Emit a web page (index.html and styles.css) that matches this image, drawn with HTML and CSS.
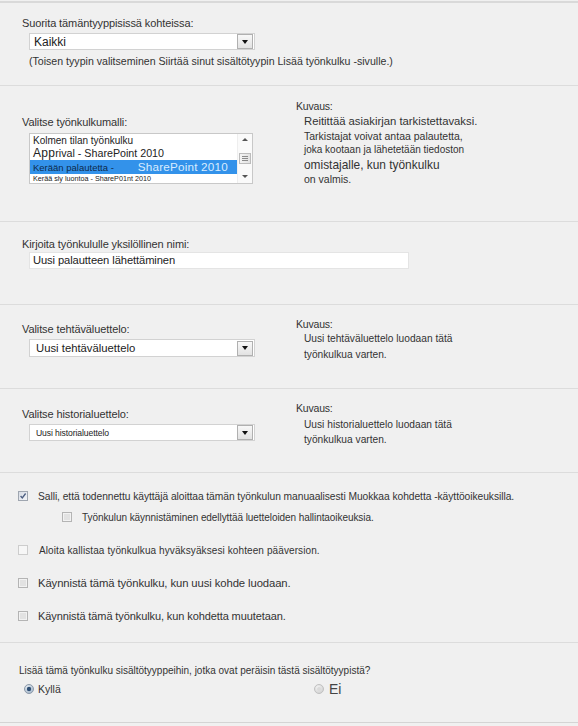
FILE: index.html
```html
<!DOCTYPE html>
<html lang="fi">
<head>
<meta charset="utf-8">
<title>Lisää työnkulku</title>
<link rel="stylesheet" href="styles.css">
</head>
<body>
<div class="page">
  <section class="sec s1">
    <div class="label">Suorita tämäntyyppisissä kohteissa:</div>
    <div class="select sel-kaikki">
      <span class="sel-text">Kaikki</span>
      <span class="sel-btn"><span class="tri"></span></span>
    </div>
    <div class="note">(Toisen tyypin valitseminen Siirtää sinut sisältötyypin Lisää työnkulku -sivulle.)</div>
  </section>

  <section class="sec s2 cols">
    <div class="left">
      <div class="label">Valitse työnkulkumalli:</div>
      <div class="listbox">
        <div class="items">
          <div class="item i1">Kolmen tilan työnkulku</div>
          <div class="item i2"><span class="big">App</span>rival - SharePoint 2010</div>
          <div class="item i3 selected">Kerään palautetta -<span class="sp">SharePoint 2010</span></div>
          <div class="item i4">Kerää sly luontoa - ShareP01nt 2010</div>
        </div>
        <div class="scroll">
          <span class="arr up"></span>
          <span class="thumb"><i></i><i></i><i></i></span>
          <span class="arr down"></span>
        </div>
      </div>
    </div>
    <div class="right">
      <div class="kuvaus">Kuvaus:</div>
      <div class="desc d1">Reitittää asiakirjan tarkistettavaksi.</div>
      <div class="desc d2">Tarkistajat voivat antaa palautetta,</div>
      <div class="desc d3">joka kootaan ja lähetetään tiedoston</div>
      <div class="desc d4">omistajalle, kun työnkulku</div>
      <div class="desc d5">on valmis.</div>
    </div>
  </section>

  <section class="sec s3">
    <div class="label">Kirjoita työnkululle yksilöllinen nimi:</div>
    <div class="input">Uusi palautteen lähettäminen</div>
  </section>

  <section class="sec s4 cols">
    <div class="left">
      <div class="label">Valitse tehtäväluettelo:</div>
      <div class="select sel-task">
        <span class="sel-text">Uusi tehtäväluettelo</span>
        <span class="sel-btn"><span class="tri"></span></span>
      </div>
    </div>
    <div class="right">
      <div class="kuvaus">Kuvaus:</div>
      <div class="desc dl first">Uusi tehtäväluettelo luodaan tätä</div>
      <div class="desc dl">työnkulkua varten.</div>
    </div>
  </section>

  <section class="sec s5 cols">
    <div class="left">
      <div class="label">Valitse historialuettelo:</div>
      <div class="select sel-hist">
        <span class="sel-text">Uusi historialuettelo</span>
        <span class="sel-btn"><span class="tri"></span></span>
      </div>
    </div>
    <div class="right">
      <div class="kuvaus">Kuvaus:</div>
      <div class="desc dh first">Uusi historialuettelo luodaan tätä</div>
      <div class="desc dh">työnkulkua varten.</div>
    </div>
  </section>

  <section class="sec s6">
    <div class="check r1">
      <svg class="cb" width="10" height="10" viewBox="0 0 10 10"><defs><linearGradient id="g1" x1="0" y1="0" x2="1" y2="1"><stop offset="0" stop-color="#d6dbe4"/><stop offset="1" stop-color="#f4f6f9"/></linearGradient></defs><rect x="0.5" y="0.5" width="9" height="9" fill="url(#g1)" stroke="#9fa6b0"/><path d="M2.6 5 L4.3 7 L7.6 2.5" fill="none" stroke="#4d5f82" stroke-width="1.3"/></svg>
      <span class="ct t1">Salli, että todennettu käyttäjä aloittaa tämän työnkulun manuaalisesti Muokkaa kohdetta -käyttöoikeuksilla.</span>
    </div>
    <div class="check r2">
      <svg class="cb" width="10" height="10" viewBox="0 0 10 10"><rect x="0.5" y="0.5" width="9" height="9" fill="#f2f2f2" stroke="#b4b4b4"/><rect x="2" y="2" width="6" height="6" fill="#e2e2e2"/></svg>
      <span class="ct t2">Työnkulun käynnistäminen edellyttää luetteloiden hallintaoikeuksia.</span>
    </div>
    <div class="check r3">
      <svg class="cb" width="10" height="10" viewBox="0 0 10 10"><rect x="0.5" y="0.5" width="9" height="9" fill="#f7f7f7" stroke="#cdcdcd"/></svg>
      <span class="ct t3">Aloita kallistaa työnkulkua hyväksyäksesi kohteen pääversion.</span>
    </div>
    <div class="check r4">
      <svg class="cb" width="10" height="10" viewBox="0 0 10 10"><rect x="0.5" y="0.5" width="9" height="9" fill="#f2f2f2" stroke="#b4b4b4"/><rect x="2" y="2" width="6" height="6" fill="#e2e2e2"/></svg>
      <span class="ct t4">Käynnistä tämä työnkulku, kun uusi kohde luodaan.</span>
    </div>
    <div class="check r5">
      <svg class="cb" width="10" height="10" viewBox="0 0 10 10"><rect x="0.5" y="0.5" width="9" height="9" fill="#f2f2f2" stroke="#b4b4b4"/><rect x="2" y="2" width="6" height="6" fill="#e2e2e2"/></svg>
      <span class="ct t5">Käynnistä tämä työnkulku, kun kohdetta muutetaan.</span>
    </div>
  </section>

  <section class="sec s7">
    <div class="question">Lisää tämä työnkulku sisältötyyppeihin, jotka ovat peräisin tästä sisältötyypistä?</div>
    <div class="radios">
      <label class="radio yes">
        <svg width="10" height="10" viewBox="0 0 10 10"><defs><radialGradient id="rg1" cx="0.4" cy="0.35" r="0.7"><stop offset="0" stop-color="#eef3f8"/><stop offset="1" stop-color="#9fb3c8"/></radialGradient></defs><circle cx="5" cy="5" r="4.5" fill="url(#rg1)" stroke="#8e9aa8"/><circle cx="5" cy="5" r="2.2" fill="#2f4f74"/></svg>
        <span class="rt">Kyllä</span>
      </label>
      <label class="radio no">
        <svg width="10" height="10" viewBox="0 0 10 10"><defs><radialGradient id="rg2" cx="0.4" cy="0.35" r="0.7"><stop offset="0" stop-color="#f4f4f4"/><stop offset="1" stop-color="#cfcfcf"/></radialGradient></defs><circle cx="5" cy="5" r="4.5" fill="url(#rg2)" stroke="#c0c0c0"/><circle cx="5" cy="5" r="2" fill="#dadada"/></svg>
        <span class="rt ei">Ei</span>
      </label>
    </div>
  </section>
</div>
</body>
</html>
```

FILE: styles.css
```css
html, body {
  margin: 0;
  padding: 0;
  background: #f0f0f0;
}
body {
  font-family: "Liberation Sans", Arial, sans-serif;
  color: #333;
  font-size: 11px;
}
.page {
  border-top: 2px solid #d9d9d9;
  margin-top: 1px;
  border-bottom: 1px solid #d4d4d4;
}
.sec {
  box-sizing: border-box;
  border-bottom: 1px solid #dcdcdc;
}
.sec:last-child { border-bottom: none; }

.label {
  font-size: 11px;
  line-height: 14px;
  padding-left: 22px;
  letter-spacing: -0.1px;
}

/* select */
.select {
  box-sizing: border-box;
  margin-left: 29px;
  width: 226px;
  height: 17px;
  background: #fff;
  border: 1px solid #d2d2d2;
  display: flex;
  align-items: center;
  justify-content: space-between;
}
.sel-text {
  padding-left: 4px;
  font-size: 12px;
  color: #222;
}
.sel-btn {
  box-sizing: border-box;
  width: 16px;
  height: 15px;
  border: 1px solid #b0b0b0;
  background: linear-gradient(#f8f8f8, #e2e2e2);
  display: flex;
  align-items: center;
  justify-content: center;
  margin-right: 1px;
}
.tri {
  width: 0;
  height: 0;
  border-left: 3px solid transparent;
  border-right: 3px solid transparent;
  border-top: 4px solid #111;
}

/* section 1 */
.s1 { height: 83px; padding-top: 13px; }
.s1 .select { margin-top: 3px; }
.note {
  margin-top: 4px;
  padding-left: 29px;
  font-size: 10.6px;
  line-height: 14px;
}

/* two-column sections */
.cols {
  display: grid;
  grid-template-columns: 296px 1fr;
  align-items: start;
}
.right .kuvaus {
  font-size: 10.5px;
  line-height: 14px;
  letter-spacing: -0.2px;
}
.desc { padding-left: 8px; color: #333; }

.s2 { height: 136px; padding-top: 13px; }
.s2 .left { margin-top: 16px; }
.d1 { font-size: 11.3px; line-height: 15px; margin-top: 1px; }
.d2 { font-size: 10.5px; line-height: 14px; }
.d3 { font-size: 10px; line-height: 13px; }
.d4 { font-size: 11.9px; line-height: 16px; margin-top: 1px; }
.d5 { font-size: 10.5px; line-height: 13px; }

/* listbox */
.listbox {
  box-sizing: border-box;
  margin-top: 4px;
  margin-left: 29px;
  width: 224px;
  height: 51px;
  background: #fff;
  border: 1px solid #c8c8c8;
  display: flex;
}
.items { flex: 1; padding-top: 1px; }
.item {
  padding-left: 3px;
  color: #222;
  white-space: nowrap;
}
.i1 { font-size: 10px; line-height: 11px; }
.i2 { font-size: 10.7px; line-height: 14px; }
.i2 .big { font-size: 12px; letter-spacing: 0.3px; }
.i3.selected {
  background: #3392ea;
  color: #0d2a4a;
  font-size: 9.5px;
  line-height: 13px;
}
.i3 .sp { color: #d8ecff; font-size: 11.7px; margin-left: 24px; letter-spacing: 0.2px; }
.i4 { font-size: 7.2px; line-height: 10px; }
.scroll {
  width: 15px;
  background: #fafafa;
  border-left: 1px solid #eee;
  display: flex;
  flex-direction: column;
  align-items: center;
  justify-content: space-between;
  padding: 4px 0 5px;
  box-sizing: border-box;
}
.arr {
  width: 0;
  height: 0;
  border-left: 3px solid transparent;
  border-right: 3px solid transparent;
}
.arr.up { border-bottom: 3px solid #555; }
.arr.down { border-top: 3px solid #555; }
.thumb {
  box-sizing: border-box;
  width: 12px;
  height: 11px;
  border: 1px solid #bcbcbc;
  background: linear-gradient(90deg, #f4f4f4, #e2e2e2);
  display: flex;
  flex-direction: column;
  align-items: center;
  justify-content: center;
  gap: 1px;
}
.thumb i {
  display: block;
  width: 6px;
  height: 1px;
  background: #8a8a8a;
}

/* section 3 */
.s3 { height: 83px; padding-top: 15px; }
.input {
  box-sizing: border-box;
  margin-top: 1px;
  margin-left: 29px;
  width: 380px;
  height: 17px;
  background: #fff;
  border: 1px solid #e4e4e4;
  padding-left: 3px;
  font-size: 11.2px;
  line-height: 15px;
  color: #222;
  letter-spacing: -0.1px;
}

/* section 4 */
.s4 { height: 84px; padding-top: 12px; }
.s4 .left { margin-top: 5px; }
.s4 .select { margin-top: 3px; height: 18px; }
.sel-task .sel-text { font-size: 11.3px; padding-left: 6px; }
.dl { font-size: 10.2px; line-height: 16px; }

/* section 5 */
.s5 { height: 84px; padding-top: 12px; }
.s5 .left { margin-top: 6px; }
.s5 .select { margin-top: 3px; }
.sel-hist .sel-text { font-size: 8.6px; letter-spacing: -0.1px; padding-left: 6px; }
.dh { font-size: 10.2px; line-height: 15px; }
.dh.first { margin-top: 2px; }

/* section 6 */
.s6 { height: 170px; padding-top: 15px; }
.check {
  display: flex;
  align-items: center;
  height: 16px;
  padding-left: 18px;
}
.check .cb { flex: none; }
.ct { padding-left: 10px; white-space: nowrap; }
.r2 { margin-top: 5px; padding-left: 62px; }
.r3, .r4, .r5 { margin-top: 17px; }
.t1 { font-size: 10.25px; letter-spacing: -0.05px; }
.t2 { font-size: 10px; letter-spacing: -0.07px; }
.t3 { font-size: 10px; letter-spacing: 0.1px; padding-left: 11px; }
.t4 { font-size: 11.3px; letter-spacing: -0.1px; }
.t5 { font-size: 11px; letter-spacing: -0.1px; }

/* section 7 */
.s7 { height: 79px; padding-top: 21px; }
.question {
  padding-left: 19px;
  font-size: 10px;
  line-height: 14px;
}
.radios {
  margin-top: 3px;
  display: grid;
  grid-template-columns: 314px 1fr;
  height: 14px;
  align-items: center;
}
.radio {
  display: flex;
  align-items: center;
}
.radio.yes { padding-left: 24px; }
.radio svg { flex: none; }
.rt { padding-left: 4px; font-size: 10.5px; }
.rt.ei { font-size: 14px; color: #444; padding-left: 5px; }
```
